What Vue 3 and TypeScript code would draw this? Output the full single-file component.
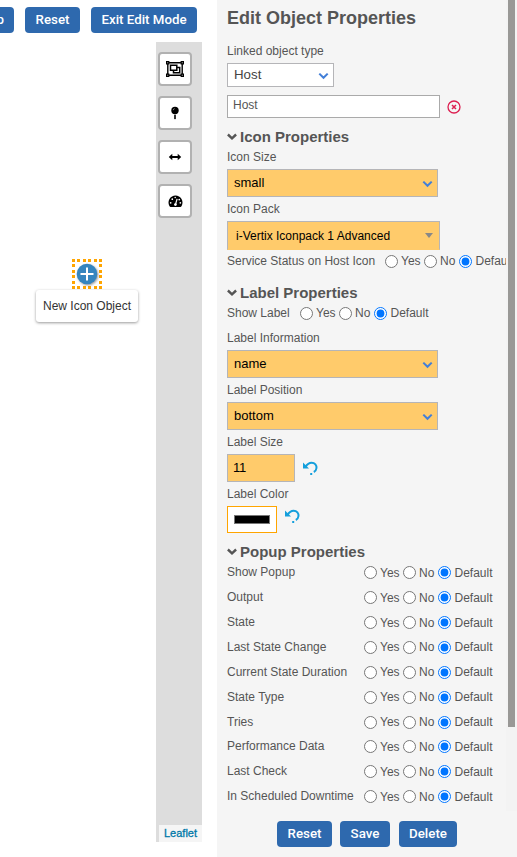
<script setup lang="ts">
import { ref } from 'vue'

interface Option { label: string; value: string }

const options: Option[] = [
  { label: 'Yes', value: 'yes' },
  { label: 'No', value: 'no' },
  { label: 'Default', value: 'default' },
]

const popupRows: string[] = [
  'Show Popup', 'Output', 'State', 'Last State Change', 'Current State Duration',
  'State Type', 'Tries', 'Performance Data', 'Last Check', 'In Scheduled Downtime',
]

const popupValues = ref<string[]>(popupRows.map(() => 'default'))
const serviceStatus = ref('default')
const showLabel = ref('default')
const tools: string[] = ['group', 'pin', 'line', 'gauge']
</script>

<template>
  <div class="page">
    <main class="editor">
      <div class="toolbar">
        <button class="btn map-btn">Map</button>
        <button class="btn w55">Reset</button>
        <button class="btn w106">Exit Edit Mode</button>
      </div>
      <div class="map">
        <div class="canvas">
          <div class="object">
            <div class="marker">
              <svg width="22" height="22" viewBox="0 0 22 22">
                <circle cx="11" cy="11" r="10.3" fill="#3585bf" />
                <path d="M11 4.500v13M4.500 11h13" stroke="#fff" stroke-width="2" />
              </svg>
            </div>
            <div class="caption">New Icon Object</div>
          </div>
        </div>
        <div class="strip">
          <div v-for="t in tools" :key="t" class="tool">
            <svg v-if="t === 'group'" width="18" height="16" viewBox="0 0 18 16" fill="none" stroke="#000">
              <path d="M1.800 1.800h14.400v12.400H1.800z" stroke-width="1.400" />
              <path d="M4.500 4.200h6.300v5H4.500z" stroke-width="1.500" />
              <path d="M11 6.500h2.700v5.300H7.500V9.500" stroke-width="1.500" />
              <path d="M0 0h3.400v3.400H0zM14.600 0H18v3.400h-3.400zM0 12.600h3.400V16H0zM14.600 12.600H18V16h-3.400z" fill="#000" stroke="none" />
              <path d="M1.200 1.200h1v1h-1zM15.800 1.200h1v1h-1zM1.200 13.800h1v1h-1zM15.800 13.800h1v1h-1z" fill="#aaa" stroke="none" />
            </svg>
            <svg v-else-if="t === 'pin'" width="10" height="14" viewBox="0 0 10 14">
              <circle cx="5" cy="4.500" r="3.700" />
              <path d="M4.200 8.800h1.600v3.700l-.8 1-.8-1z" />
              <path d="M3.200 4.200q.1-1.400 1.500-1.600" fill="none" stroke="#999" stroke-width=".8" />
            </svg>
            <svg v-else-if="t === 'line'" width="14" height="10" viewBox="0 0 14 10">
              <path d="M.8 5l3.500-3.200v2.300h5.400V1.800L13.200 5 9.700 8.200V5.900H4.300v2.300z" />
            </svg>
            <svg v-else width="15" height="13" viewBox="0 0 14 12">
              <path d="M7 .5A6.500 6.500 0 0 0 1.300 10.200q.5.900 1.200.9h9q.7 0 1.200-.9A6.500 6.500 0 0 0 7 .5z" />
              <path d="M7 8.800l1.500-5.200" stroke="#fff" stroke-width="1.100" />
              <g fill="#fff"><circle cx="2.500" cy="7.200" r=".8" /><circle cx="4" cy="3.800" r=".8" /><circle cx="6.700" cy="2.300" r=".7" /><circle cx="10.500" cy="4.200" r=".8" /><circle cx="11.500" cy="7.200" r=".8" /><circle cx="6.900" cy="8.900" r="1.300" /></g>
            </svg>
          </div>
          <a class="leaflet">Leaflet</a>
        </div>
      </div>
    </main>

    <aside class="panel">
      <div class="scroll">
        <div class="form">
          <h1>Edit Object Properties</h1>
          <div class="label first">Linked object type</div>
          <div class="select type">
            <span>Host</span>
            <svg class="chev" width="11" height="8" viewBox="0 0 11 8"><path d="M1.300 1.600l4.200 4.200 4.200-4.200" /></svg>
          </div>
          <div class="line host-line">
            <div class="host">Host</div>
            <svg width="14" height="14" viewBox="0 0 14 14" fill="none" stroke="#dc1e50">
              <circle cx="7" cy="7" r="6" stroke-width="1.300" />
              <path d="M5 5l4 4M9 5L5 9" stroke-width="1.500" />
            </svg>
          </div>

          <h2><svg width="10" height="8" viewBox="0 0 10 8"><path d="M.9 1.500L5 5.300l4.100-3.800" /></svg>Icon Properties</h2>
          <div class="label short">Icon Size</div>
          <div class="select">
            <span>small</span>
            <svg class="chev" width="11" height="8" viewBox="0 0 11 8"><path d="M1.300 1.600l4.200 4.200 4.200-4.200" /></svg>
          </div>
          <div class="label">Icon Pack</div>
          <div class="select pack">
            <span>i-Vertix Iconpack 1 Advanced</span>
            <svg width="8" height="5" viewBox="0 0 8 5"><path d="M0 0h8L4 5z" fill="#888" /></svg>
          </div>
          <div class="row service">
            <span class="row-label">Service Status on Host Icon</span>
            <label v-for="o in options" :key="o.value" :class="o.value">
              <input v-model="serviceStatus" type="radio" name="service" :value="o.value">{{ o.label }}
            </label>
          </div>

          <h2 class="spaced"><svg width="10" height="8" viewBox="0 0 10 8"><path d="M.9 1.500L5 5.300l4.100-3.800" /></svg>Label Properties</h2>
          <div class="row show-label">
            <span class="row-label">Show Label</span>
            <label v-for="o in options" :key="o.value" :class="o.value">
              <input v-model="showLabel" type="radio" name="showLabel" :value="o.value">{{ o.label }}
            </label>
          </div>
          <div class="label">Label Information</div>
          <div class="select">
            <span>name</span>
            <svg class="chev" width="11" height="8" viewBox="0 0 11 8"><path d="M1.300 1.600l4.200 4.200 4.200-4.200" /></svg>
          </div>
          <div class="label">Label Position</div>
          <div class="select">
            <span>bottom</span>
            <svg class="chev" width="11" height="8" viewBox="0 0 11 8"><path d="M1.300 1.600l4.200 4.200 4.200-4.200" /></svg>
          </div>
          <div class="label">Label Size</div>
          <div class="line">
            <div class="select size">11</div>
            <svg class="undo" width="15" height="15" viewBox="0 0 15 15"><path d="M0 1.600v6h6L4 5.600z" /><path d="M2.600 5.800Q5 1.700 8.600 1.700C12 1.700 13.700 4.300 13.500 7Q13.200 9.800 10.800 11" class="arc" /><path d="M7.200 12h2v2h-2z" /></svg>
          </div>
          <div class="label">Label Color</div>
          <div class="line color-line">
            <div class="color"><i /></div>
            <svg class="undo" width="15" height="15" viewBox="0 0 15 15"><path d="M0 1.600v6h6L4 5.600z" /><path d="M2.600 5.800Q5 1.700 8.600 1.700C12 1.700 13.700 4.300 13.500 7Q13.200 9.800 10.800 11" class="arc" /><path d="M7.200 12h2v2h-2z" /></svg>
          </div>

          <h2><svg width="10" height="8" viewBox="0 0 10 8"><path d="M.9 1.500L5 5.300l4.100-3.800" /></svg>Popup Properties</h2>
          <div class="popup-rows">
            <div v-for="(name, i) in popupRows" :key="name" class="row popup">
              <span class="row-label">{{ name }}</span>
              <label v-for="o in options" :key="o.value" :class="o.value">
                <input v-model="popupValues[i]" type="radio" :name="'popup' + i" :value="o.value">{{ o.label }}
              </label>
            </div>
          </div>
        </div>
        <div class="track"><div class="thumb" /></div>
      </div>
      <div class="footer">
        <button class="btn w55">Reset</button>
        <button class="btn w50">Save</button>
        <button class="btn w58">Delete</button>
      </div>
    </aside>
  </div>
</template>

<style>
body { background: #fff; overflow: hidden; }
</style>

<style scoped>
* { box-sizing: border-box; }
.page { display: flex; width: 517px; height: 857px; overflow: hidden; font-family: "Liberation Sans", Arial, sans-serif; font-size: 12px; color: #555; }
.editor { width: 217px; display: flex; flex-direction: column; }
.toolbar { display: flex; justify-content: flex-end; padding: 7px 20px 0 0; height: 42px; gap: 11px; overflow: hidden; }
.btn { flex: none; height: 26px; padding: 0; border: 0; border-radius: 4px; background: #2e69ae; color: #fff; font: 500 13.300px/26px Roboto, sans-serif; text-align: center; }
.map-btn { width: 50px; padding-right: 10px; text-align: right; }
.w55 { width: 55px; }
.w106 { width: 106px; }
.w50 { width: 50px; }
.w58 { width: 58px; }
.map { display: flex; height: 800px; width: 202px; }
.canvas { width: 156px; padding: 217px 0 0 18px; }
.object { display: flex; flex-direction: column; align-items: center; width: 138px; }
.marker { width: 30px; height: 30px; display: flex; align-items: center; justify-content: center;
  background: repeating-linear-gradient(90deg, #ffa500 0 3px, transparent 3px 5.400px) 0 0 / 30px 3px no-repeat, repeating-linear-gradient(90deg, #ffa500 0 3px, transparent 3px 5.400px) 0 100% / 30px 3px no-repeat, repeating-linear-gradient(#ffa500 0 3px, transparent 3px 5.400px) 0 0 / 3px 30px no-repeat, repeating-linear-gradient(#ffa500 0 3px, transparent 3px 5.400px) 100% 0 / 3px 30px no-repeat; }
.marker svg { flex: none; filter: drop-shadow(1px 1px 1px rgba(0,0,0,.4)); }
.caption { margin-top: 1px; width: 102px; height: 32px; border-radius: 3px; background: #fff; box-shadow: 0 1px 3px rgba(0,0,0,.4); text-align: center; line-height: 32px; color: #333; white-space: nowrap; }
.strip { width: 46px; background: #ddd; padding: 10px 0 0 2px; display: flex; flex-direction: column; gap: 10px; }
.tool { width: 34px; height: 34px; border: 2px solid #b1b1b1; border-radius: 4px; background: #fff; display: flex; align-items: center; justify-content: center; }
.leaflet { margin-top: auto; margin-left: 1px; width: 43px; height: 17px; background: #f5f5f5; color: #0078a8; font-size: 11px; line-height: 17px; text-align: center; -webkit-text-stroke: .3px #0078a8; }
.panel { width: 300px; background: #f5f5f5; display: flex; flex-direction: column; }
.scroll { display: flex; height: 811px; overflow: hidden; }
.form { width: 289px; padding-left: 10px; overflow: hidden; }
.track { width: 11px; background: #f3f3f3; padding: 0 2px; }
.thumb { height: 727px; background: #999896; }
h1 { margin: 0; height: 36px; font-size: 18px; line-height: 36px; font-weight: bold; color: #555; }
h2 { margin: 9px 0 0; height: 20px; font-size: 15px; line-height: 20px; color: #555; display: flex; align-items: center; gap: 3px; white-space: nowrap; }
h2.spaced { margin-top: 11px; }
h2 svg path { fill: none; stroke: #555; stroke-width: 2.400; }
.label { height: 24px; line-height: 24px; }
.label.first { margin-top: 3px; }
.label.short { height: 22px; line-height: 20px; }
.select { width: 211px; height: 28px; border: 1px solid #b5b5b8; background: #ffcb6b; color: #000; font-size: 13px; padding: 0 4px 1px 6px; display: flex; align-items: center; justify-content: space-between; white-space: nowrap; }
.select.type { width: 107px; height: 24px; background: #fff; color: #444; font-size: 13.300px; }
.chev { position: relative; top: 1px; }
.chev path { fill: none; stroke: #427fd8; stroke-width: 2; }
.select.pack { width: 213px; height: 29px; padding: 0 6px 0 8px; font-size: 12px; border-bottom-color: #ffcb6b; }
.line { display: flex; align-items: center; gap: 8px; }
.host-line { margin-top: 8px; gap: 7px; }
.host { width: 213px; height: 23px; border: 1px solid #aaa; background: #fff; padding-left: 5px; line-height: 19px; }
.select.size { width: 68px; padding-left: 5px; padding-bottom: 2px; letter-spacing: -.3px; }
.undo { fill: #149fdc; }
.undo .arc { fill: none; stroke: #149fdc; stroke-width: 2; }
.color-line { align-items: flex-start; }
.color { width: 50px; height: 27px; border: 1px solid #ffa500; background: #fff; padding: 8px 6px; }
.color i { display: block; height: 9px; border: 1px solid #777; background: #000; }
.color-line .undo { margin-top: 3px; }
.row { display: flex; align-items: center; height: 22px; white-space: nowrap; }
.row-label { flex: none; position: relative; top: -.5px; }
.row label { flex: none; display: flex; align-items: center; gap: 3px; }
.row input { margin: 0; width: 13px; height: 13px; flex: none; }
.row .yes { width: 39px; }
.row .no { width: 35px; }
.row .default { gap: 3.500px; }
.service .row-label { width: 158px; }
.show-label { height: 23px; align-items: flex-start; padding-top: 3px; }
.show-label .row-label { width: 73px; }
.popup-rows { margin-top: -1.700px; }
.popup { height: 24.900px; }
.popup .row-label { width: 137px; }
.footer { display: flex; gap: 8px; padding: 10px 0 0 60px; }
.footer .w58 { margin-left: 1px; }
</style>
